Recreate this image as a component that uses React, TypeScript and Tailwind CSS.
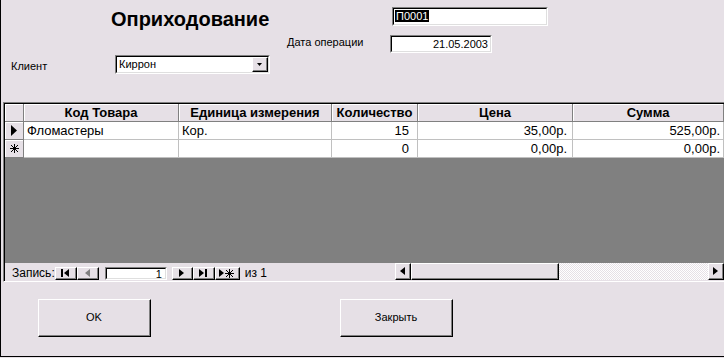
import React from "react";

// win95-ish 3d borders
const raised =
  "border-t border-l border-b border-r border-t-white border-l-white border-b-black border-r-black";
const sunkenOuter =
  "border-t border-l border-b border-r border-t-[#808080] border-l-[#808080] border-b-white border-r-white";
const sunkenInner =
  "border-t border-l border-b border-r border-t-black border-l-black border-b-[#dfdfdf] border-r-[#dfdfdf]";

function Sunken({ className, children }: { className: string; children?: React.ReactNode }) {
  return (
    <div className={`${sunkenOuter} ${className}`}>
      <div className={`${sunkenInner} h-full w-full bg-white`}>{children}</div>
    </div>
  );
}

function Raised({ className, children }: { className: string; children?: React.ReactNode }) {
  return (
    <div className={`${raised} ${className}`}>
      <div className="h-full w-full border-r border-b border-r-[#808080] border-b-[#808080] flex items-center justify-center">
        {children}
      </div>
    </div>
  );
}

const headers = [
  { label: "", w: "w-[19px]" },
  { label: "Код Товара", w: "w-[155px]" },
  { label: "Единица измерения", w: "w-[153px]" },
  { label: "Количество", w: "w-[86px]" },
  { label: "Цена", w: "w-[155px]" },
  { label: "Сумма", w: "w-[151px]" },
];

const rows = [
  { mark: "cur", name: "Фломастеры", unit: "Кор.", qty: "15", price: "35,00р.", sum: "525,00р." },
  { mark: "new", name: "", unit: "", qty: "0", price: "0,00р.", sum: "0,00р." },
];

function Tri({ dir, color = "#000" }: { dir: "l" | "r"; color?: string }) {
  return (
    <svg width="5" height="8" viewBox="0 0 5 8">
      {dir === "r" ? (
        <path d="M0 0 L5 4 L0 8 Z" fill={color} />
      ) : (
        <path d="M5 0 L0 4 L5 8 Z" fill={color} />
      )}
    </svg>
  );
}

function Star() {
  return (
    <svg width="9" height="9" viewBox="0 0 9 9" stroke="#000" strokeWidth="1" shapeRendering="crispEdges">
      <path d="M4.5 0 V9 M0 4.5 H9 M1 1 L8 8 M8 1 L1 8" />
    </svg>
  );
}

export default function App() {
  return (
    <div className="w-[724px] h-[358px] overflow-hidden bg-[#e6e0e6] font-['Liberation_Sans',Arial,sans-serif] text-black">
      <div className="h-[357px] border-l border-b border-black flex flex-col">
        {/* header fields */}
        <div className="h-[102px] pt-[7px] flex flex-col">
          <div className="flex h-[19px]">
            <div className="w-[391px] pl-[110px] pt-[1px] text-[20px] leading-[22px] font-bold">Оприходование</div>
            <Sunken className="w-[156px] h-[19px]">
              <div className="pl-[1px] pt-[1px] text-[11px] leading-[13px]">
                <span className="bg-black text-white px-[1px]">П0001</span>
              </div>
            </Sunken>
          </div>
          <div className="flex h-[18px] mt-[9px]">
            <div className="w-[389px] pl-[286px] pt-[1px] text-[11px] leading-[13px]">Дата операции</div>
            <Sunken className="w-[102px] h-[18px]">
              <div className="text-right pr-[2px] pt-[1px] text-[11px] leading-[13px]">21.05.2003</div>
            </Sunken>
          </div>
          <div className="flex h-[19px] mt-[2px]">
            <div className="w-[114px] pl-[10px] pt-[5px] text-[11px] leading-[13px]">Клиент</div>
            <Sunken className="w-[155px] h-[19px]">
              <div className="flex h-full items-center">
                <div className="flex-1 pl-[2px] text-[11px] leading-[13px]">Киррон</div>
                <Raised className="w-[16px] h-[15px] bg-[#e6e0e6]">
                  <svg width="5" height="3" viewBox="0 0 5 3">
                    <path d="M0 0 H5 L2.5 3 Z" fill="#000" />
                  </svg>
                </Raised>
              </div>
            </Sunken>
          </div>
        </div>

        {/* datasheet */}
        <div className="ml-[2px] h-[180px] border-t border-l border-t-[#808080] border-l-[#808080] border-b border-b-white">
          <div className="h-full border-t border-l border-black flex flex-col">
            <div className="flex h-[18px] shrink-0">
              {headers.map((h, i) => (
                <div
                  key={i}
                  className={`${h.w} shrink-0 h-full border-r border-b border-[#808080] shadow-[inset_1px_1px_0_#fff] text-[13px] leading-[17px] font-bold text-center`}
                >
                  {h.label}
                </div>
              ))}
            </div>
            {rows.map((r, i) => (
              <div key={i} className="flex h-[18px] shrink-0 text-[13px] leading-[17px]">
                <div className="w-[19px] shrink-0 border-r border-b border-[#808080] shadow-[inset_1px_1px_0_#fff] flex items-center justify-center">
                  {r.mark === "cur" ? (
                    <svg width="6" height="11" viewBox="0 0 6 11">
                      <path d="M0 0 L6 5.5 L0 11 Z" fill="#000" />
                    </svg>
                  ) : (
                    <Star />
                  )}
                </div>
                <div className="w-[155px] shrink-0 bg-white border-r border-b border-[#c0c0c0] pl-[3px]">{r.name}</div>
                <div className="w-[153px] shrink-0 bg-white border-r border-b border-[#c0c0c0] pl-[3px]">{r.unit}</div>
                <div className="w-[86px] shrink-0 bg-white border-r border-b border-[#c0c0c0] pr-[8px] text-right">{r.qty}</div>
                <div className="w-[155px] shrink-0 bg-white border-r border-b border-[#c0c0c0] pr-[5px] text-right">{r.price}</div>
                <div className="w-[151px] shrink-0 bg-white border-r border-b border-[#c0c0c0] pr-[3px] text-right">{r.sum}</div>
              </div>
            ))}
            <div className="flex-1 bg-[#808080]" />
            {/* record navigator + scrollbar */}
            <div className="h-[18px] shrink-0 flex items-start text-[12px] leading-[13px]">
              <div className="pl-[7px] pt-[4px] w-[50px]">Запись:</div>
              <div className="flex pt-[4px]">
                <Raised className="w-[22px] h-[13px]">
                  <div className="flex items-center">
                    <div className="w-[2px] h-[8px] bg-black mr-[1px]" />
                    <Tri dir="l" />
                  </div>
                </Raised>
                <Raised className="w-[22px] h-[13px]">
                  <Tri dir="l" color="#808080" />
                </Raised>
                <Sunken className="ml-[6px] w-[62px] h-[13px]">
                  <div className="text-right pr-[3px] text-[11px] leading-[10px]">1</div>
                </Sunken>
                <Raised className="ml-[5px] w-[21px] h-[13px]">
                  <Tri dir="r" />
                </Raised>
                <Raised className="w-[22px] h-[13px]">
                  <div className="flex items-center">
                    <Tri dir="r" />
                    <div className="w-[2px] h-[8px] bg-black ml-[1px]" />
                  </div>
                </Raised>
                <Raised className="w-[25px] h-[13px]">
                  <div className="flex items-center gap-[1px]">
                    <Tri dir="r" />
                    <Star />
                  </div>
                </Raised>
                <div className="ml-[5px] leading-[13px]">из 1</div>
              </div>
              <div className="ml-[128px] flex h-[17px]">
                <Raised className="w-[16px] h-[17px] bg-[#e6e0e6]">
                  <Tri dir="l" />
                </Raised>
                <Raised className="w-[148px] h-[17px] bg-[#e6e0e6]" />
                <div className="w-[149px] h-[17px] bg-[repeating-conic-gradient(#ffffff_0%_25%,#e6e0e6_0%_50%)] bg-[length:2px_2px]" />
                <Raised className="w-[16px] h-[17px] bg-[#e6e0e6]">
                  <Tri dir="r" />
                </Raised>
              </div>
            </div>
          </div>
        </div>

        {/* buttons */}
        <div className="flex mt-[17px] ml-[37px] gap-[189px] text-[11px]">
          <Raised className="w-[113px] h-[38px]">OK</Raised>
          <Raised className="w-[113px] h-[38px]">Закрыть</Raised>
        </div>
      </div>
    </div>
  );
}
